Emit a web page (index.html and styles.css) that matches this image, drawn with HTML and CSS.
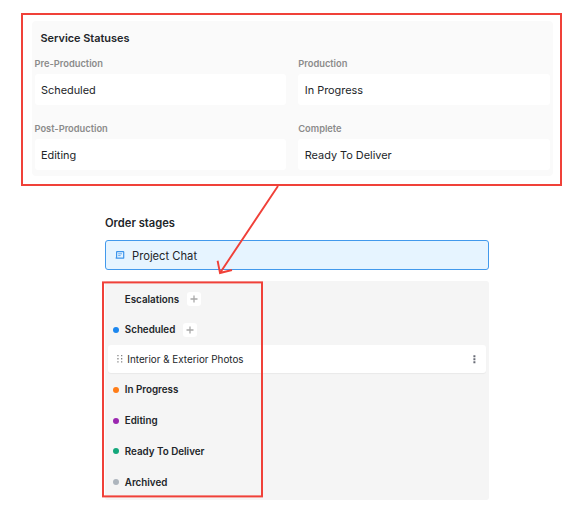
FILE: index.html
```html
<!DOCTYPE html>
<html lang="en">
<head>
<meta charset="utf-8">
<title>Service Statuses</title>
<link rel="stylesheet" href="styles.css">
</head>
<body>
<section class="callout">
  <div class="statuses">
    <h2 class="statuses-title"><span>Service Statuses</span></h2>
    <div class="fields">
      <div class="field"><div class="label"><span>Pre-Production</span></div><div class="value"><span>Scheduled</span></div></div>
      <div class="field"><div class="label"><span>Production</span></div><div class="value"><span>In Progress</span></div></div>
      <div class="field"><div class="label"><span>Post-Production</span></div><div class="value"><span>Editing</span></div></div>
      <div class="field"><div class="label"><span>Complete</span></div><div class="value"><span>Ready To Deliver</span></div></div>
    </div>
  </div>
</section>
<section class="order">
  <h2 class="order-title"><span>Order stages</span></h2>
  <div class="chat">
    <svg class="chat-icon" width="10" height="10" viewBox="0 0 10 10" fill="none" stroke="#3d94eb"><path d="M2 1.6h6.2q.5 0 .5.5v6H1.1q.5-.5.5-1.3V2q0-.4.4-.4z" stroke-width="1.2" stroke-linejoin="round"/><path d="M3.2 3.8h3.8M3.2 5.6h2.4" stroke-width=".8"/></svg>
    <span>Project Chat</span>
  </div>
  <div class="stages">
    <div class="stage"><i class="dot"></i><span>Escalations</span><b class="add"><svg width="8" height="8" viewBox="0 0 8 8"><path d="M4 .5v7M.5 4h7" stroke="#a9a9a9" stroke-width="1.3"/></svg></b></div>
    <div class="stage"><i class="dot blue"></i><span>Scheduled</span><b class="add"><svg width="8" height="8" viewBox="0 0 8 8"><path d="M4 .5v7M.5 4h7" stroke="#a9a9a9" stroke-width="1.3"/></svg></b></div>
    <div class="task">
      <svg width="6" height="8" viewBox="0 0 6 8" fill="#858585"><path d="M.3 0h1.3v1.3H.3zM4 0h1.3v1.3H4zM.3 3.1h1.3v1.3H.3zM4 3.1h1.3v1.3H4zM.3 6.2h1.3v1.3H.3zM4 6.2h1.3v1.3H4z"/></svg>
      <span>Interior &amp; Exterior Photos</span>
      <svg class="more" width="3" height="9" viewBox="0 0 3 9" fill="#686b76"><path d="M.4.2h2v2h-2zM.4 3.3h2v2h-2zM.4 6.3h2v2h-2z"/></svg>
    </div>
    <div class="stage"><i class="dot orange"></i><span>In Progress</span></div>
    <div class="stage"><i class="dot purple"></i><span>Editing</span></div>
    <div class="stage"><i class="dot green"></i><span>Ready To Deliver</span></div>
    <div class="stage"><i class="dot gray"></i><span>Archived</span></div>
  </div>
</section>
<svg class="annotation" width="581" height="514" viewBox="0 0 581 514" fill="none" stroke="#f04139"><path d="M278 186L220 273M217.6 260.8L220 273L232 270" stroke-width="1.9"/><rect x="103" y="282.4" width="159" height="214" stroke-width="2"/></svg>
</body>
</html>
```
FILE: styles.css
```css
* { box-sizing: border-box; }
body {
  margin: 0;
  width: 581px;
  height: 514px;
  padding: 13px 19px 0 21px;
  overflow: hidden;
  background: #fff;
  color: #222529;
  font-family: Inter, "Liberation Sans", sans-serif;
  position: relative;
}
h2 { margin: 0; font-weight: 600; }
.callout {
  height: 173.3px;
  border: 2px solid #f04139;
  padding: 6px 7px 0 9px;
}
.statuses {
  height: 155px;
  padding: 0 3px 0 2.5px;
  background: #fafafa;
  border-radius: 4px;
}
.statuses-title {
  height: 34px;
  padding-left: 6px;
  font-size: 10.9px;
  line-height: 34px;
}
.fields {
  display: grid;
  grid-template-columns: 1fr 1fr;
  column-gap: 12px;
  row-gap: 15px;
}
.label {
  height: 19px;
  font-size: 9.3px;
  line-height: 17px;
  font-weight: 600;
  color: #8b8b8b;
}
.value {
  height: 31px;
  padding-left: 6.5px;
  background: #fff;
  border-radius: 3px;
  font-size: 10.9px;
  line-height: 33px;
}
.order {
  width: 384px;
  margin-left: 84px;
  padding-top: 28px;
}
.order-title {
  font-size: 11.2px;
  line-height: 18px;
}
.chat {
  display: flex;
  align-items: center;
  gap: 7px;
  height: 30px;
  margin-top: 8px;
  padding: 0 9px;
  border: 1px solid #4299ec;
  border-radius: 3px;
  background: #e6f4ff;
  font-size: 11.2px;
}
.chat span { padding-top: 2px; }
.stages {
  height: 219px;
  margin-top: 11px;
  padding: 2.5px 3px 0 2.5px;
  background: #f5f5f5;
  border-radius: 3px;
}
.stage {
  display: flex;
  align-items: center;
  height: 30.8px;
  padding-left: 5.5px;
  font-size: 9.8px;
  font-weight: 600;
}
.dot {
  width: 6px;
  height: 6px;
  margin-right: 5.8px;
  border-radius: 50%;
}
.blue { background: #1c87ef; }
.orange { background: #ff7d18; }
.purple { background: #9b27b0; }
.green { background: #14a77b; }
.gray { background: #adb5bd; }
.add {
  display: flex;
  align-items: center;
  justify-content: center;
  width: 14px;
  height: 14px;
  margin-left: 8px;
  border-radius: 3px;
  background: #fff;
}
.task {
  display: flex;
  align-items: center;
  gap: 4.8px;
  height: 28px;
  margin-bottom: 1px;
  padding: 0 10.5px 0 9px;
  border-radius: 3px;
  background: #fff;
  box-shadow: 0 1px 1px #0000000d;
  font-size: 9.85px;
}
.more { margin-left: auto; }
.annotation {
  position: absolute;
  top: 0;
  left: 0;
  pointer-events: none;
}
```
